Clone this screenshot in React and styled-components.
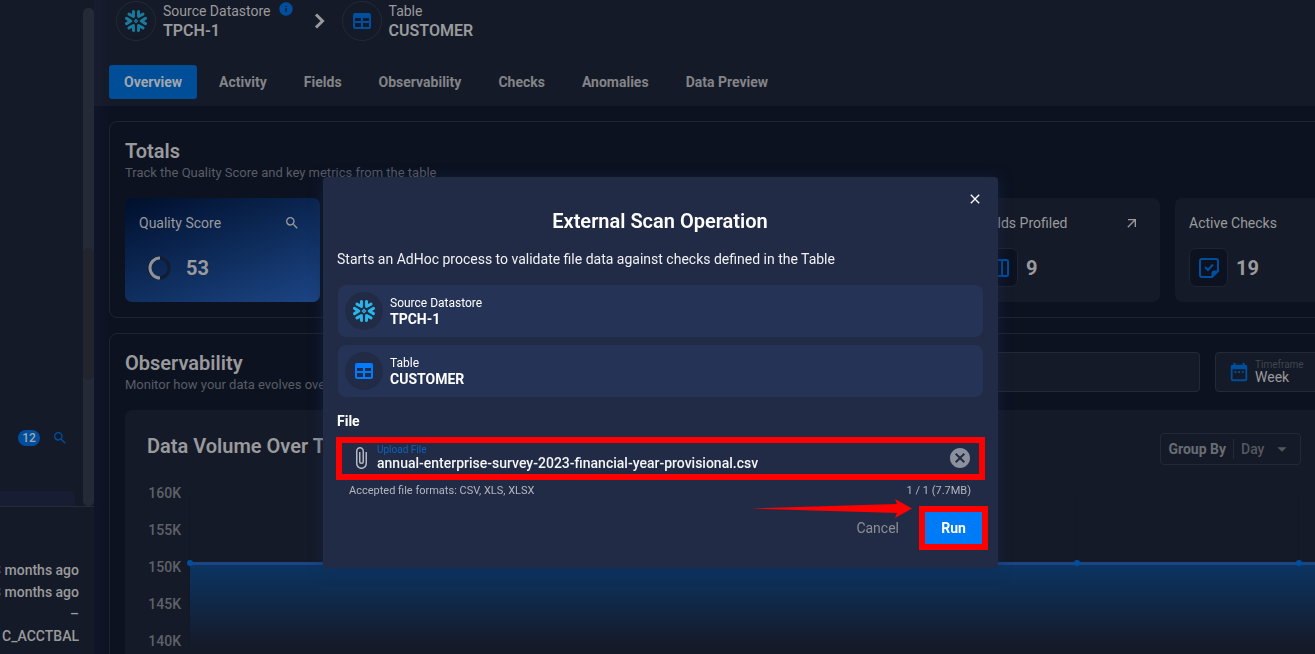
import React from 'react';
import styled, { createGlobalStyle, css } from 'styled-components';
import {
  MdSearch,
  MdArrowOutward,
  MdDateRange,
  MdArrowDropDown,
  MdAttachFile,
  MdCancel,
  MdClose,
  MdInfo,
} from 'react-icons/md';

const c = {
  page: '#0c1220',
  surface: '#151a28',
  line: '#1f2431',
  text: '#9a9a9c',
  tab: '#838487',
  muted: '#5a5d65',
  blue: '#004f9e',
  snow: '#1b7a9c',
  modal: '#222b45',
  modalRow: '#243356',
  mark: '#ff0000',
};

const GlobalStyle = createGlobalStyle`
  *, *::before, *::after { box-sizing: border-box; }
  body {
    margin: 0;
    background: ${c.page};
    color: ${c.text};
    font: 400 14px/20px Roboto, "Liberation Sans", sans-serif;
  }
  h1, h2, h3, p { margin: 0; }
  button, input, select { font: inherit; color: inherit; }
  button { border: 0; padding: 0; background: none; cursor: pointer; }
  svg { display: block; flex: none; }
`;

const Shell = styled.div`
  display: grid;
  grid-template-columns: 94px minmax(0, 1fr);
  height: 100vh;
  overflow: hidden;
`;

/* Sidebar */
const Sidebar = styled.aside`
  display: flex;
  flex-direction: column;
  background: ${c.surface};
  overflow: hidden;
`;
const SideScroll = styled.div`
  flex: 0 0 507px;
  display: flex;
  border-bottom: 1px solid #262b37;
`;
const SideList = styled.div`
  flex: 1;
  display: flex;
  flex-direction: column;
  justify-content: flex-end;
  gap: 45px;
`;
const SideTools = styled.div`
  display: flex;
  align-items: center;
  justify-content: flex-end;
  gap: 12px;
  padding-right: 15px;
  color: ${c.blue};
`;
const Badge = styled.span`
  min-width: 22px;
  border-radius: 8px;
  background: ${c.blue};
  color: #a5a5a5;
  font-size: 12px;
  font-weight: 500;
  line-height: 16px;
  text-align: center;
`;
const SideItem = styled.div`
  height: 15px;
  margin-right: 8px;
  border-radius: 0 4px 0 0;
  background: #171e33;
`;
const Track = styled.div`
  width: 11px;
  margin-top: 8px;
  padding-top: 240px;
  border-radius: 5px;
  background: #242a37;
`;
const Thumb = styled.div`
  height: 132px;
  border-radius: 5px;
  background: #22242e;
`;
const Facts = styled.ul`
  display: flex;
  flex-direction: column;
  align-items: flex-end;
  margin: 0;
  padding: 52px 15px 0 0;
  list-style: none;
  font-weight: 500;
  line-height: 22px;
  white-space: nowrap;
`;

/* Main column */
const Main = styled.main`
  display: flex;
  flex-direction: column;
  overflow: hidden;
  background: linear-gradient(90deg, #10162a, ${c.page} 16px);
`;
const Header = styled.header`
  flex: none;
  background: linear-gradient(90deg, #171c31, ${c.surface} 16px);
  padding: 1px 15px 7px;
`;
const Crumbs = styled.div`
  display: flex;
  align-items: center;
  padding-left: 7px;
`;
const Crumb = styled.div`
  display: flex;
  align-items: center;
  gap: 7px;
`;
const Round = styled.span`
  display: grid;
  place-items: center;
  width: ${(p) => (p.$filled ? 38 : 40)}px;
  height: ${(p) => (p.$filled ? 38 : 40)}px;
  border-radius: 50%;
  ${(p) =>
    p.$filled
      ? css`background: ${c.modal};`
      : css`border: 1px solid #242936;`}
`;
const CrumbLabel = styled.div`
  display: flex;
  gap: 7px;
  line-height: 20px;
`;
const CrumbName = styled.div`
  font-size: 16px;
  font-weight: 600;
  line-height: 20px;
`;
const InfoMark = styled.span`
  color: ${c.blue};
`;
const Chevron = styled.svg`
  margin: 0 15px 0 19px;
`;
const Tabs = styled.nav`
  display: flex;
  gap: 7px;
  margin-top: 24px;
`;
const Tab = styled.button`
  height: 34px;
  padding: 0 15px;
  border-radius: 3px;
  font-weight: 700;
  color: ${(p) => (p.$active ? '#a3a7ab' : c.tab)};
  background: ${(p) => (p.$active ? '#004e98' : 'transparent')};
`;
const Content = styled.div`
  flex: none;
  display: flex;
  flex-direction: column;
  gap: 15px;
  padding: 15px;
  margin-right: -86px;
`;
const Panel = styled.section`
  border: 1px solid ${c.line};
  border-radius: 8px;
  padding: 15px;
`;
const PanelHead = styled.div`
  display: flex;
  gap: 15px;
  padding-top: 3px;
`;
const HeadText = styled.div`
  flex: 1;
`;
const Heading = styled.h2`
  font-size: 20px;
  font-weight: 600;
  line-height: 22px;
`;
const Sub = styled.p`
  color: ${c.muted};
  font-size: 13px;
  line-height: 22px;
`;

/* Total cards */
const Cards = styled.div`
  display: grid;
  grid-template-columns: repeat(6, 1fr);
  gap: 15px;
  margin-top: 14px;
`;
const Card = styled.article`
  height: 104px;
  padding: 15px 20px 15px 14px;
  border-radius: 7px;
  background: ${(p) =>
    p.$score
      ? 'linear-gradient(160deg, #000f2c, #0d2a58 50%, #1c4585)'
      : c.surface};
`;
const CardTop = styled.div`
  display: flex;
  align-items: center;
  justify-content: space-between;
`;
const CardValue = styled.div`
  display: flex;
  align-items: center;
  gap: 8px;
  margin-top: 15px;
  font-size: 20px;
  font-weight: 700;
`;
const IconBox = styled.span`
  display: grid;
  place-items: center;
  width: 39px;
  height: 39px;
  border: 1px solid ${c.line};
  border-radius: 7px;
  background: ${c.page};
`;
const RingBox = styled.span`
  display: grid;
  place-items: center;
  width: 39px;
  height: 39px;
`;

/* Observability controls */
const field = css`
  height: 40px;
  border: 1px solid #242936;
  border-radius: 4px;
  background: ${c.surface};
`;
const TableFilter = styled.input`
  ${field}
  width: 420px;
  padding: 0 12px;
`;
const Timeframe = styled.div`
  ${field}
  display: flex;
  align-items: center;
  gap: 5px;
  width: 155px;
  padding: 0 12px;
  color: ${c.blue};
`;
const Stack = styled.div`
  display: flex;
  flex-direction: column;
  flex: 1;
`;
const TinyLabel = styled.label`
  font-size: 10px;
  line-height: 11px;
  color: ${(p) => p.$color || '#41454f'};
`;
const PlainSelect = styled.select`
  appearance: none;
  border: 0;
  padding: 0;
  background: none;
  color: ${c.text};
  line-height: 15px;
  outline: none;
`;

const ChartCard = styled.div`
  margin-top: 14px;
  padding: 23px 0 0 22px;
  border-radius: 7px;
  background: ${c.surface};
`;
const ChartHead = styled.div`
  display: flex;
  align-items: flex-start;
  justify-content: space-between;
  padding-right: 69px;
`;
const ChartTitle = styled.h3`
  font-size: 20px;
  font-weight: 600;
  line-height: 26px;
`;
const GroupBy = styled.div`
  display: flex;
  align-items: center;
  height: 32px;
  padding: 0 7px;
  border: 1px solid #242936;
  border-radius: 4px;
  color: #55585f;
`;
const GroupLabel = styled.label`
  padding-right: 7px;
  border-right: 1px solid #242936;
  color: #6a6c73;
  font-weight: 700;
`;
const GroupSelect = styled(PlainSelect)`
  width: 30px;
  margin-left: 7px;
  color: #55585f;
  font-weight: 500;
`;
const Plot = styled.div`
  display: grid;
  grid-template-columns: 34px minmax(0, 1fr);
  gap: 4px;
  margin-top: 10px;
`;
const Axis = styled.div`
  text-align: right;
  line-height: 37px;
  font-weight: 500;
  color: #5f6168;
`;
const ChartSvg = styled.svg`
  width: 100%;
  height: 185px;
`;

/* Modal */
const Overlay = styled.div`
  position: fixed;
  inset: 0;
  display: flex;
  align-items: flex-start;
  justify-content: center;
  padding: 177px 0 0 6px;
`;
const Dialog = styled.section`
  width: 675px;
  max-width: 96vw;
  padding: 12px 15px 18px 14px;
  border-radius: 4px;
  background: ${c.modal};
  color: #fff;
  box-shadow: 0 2px 14px rgba(20, 42, 85, 0.6);
`;
const CloseRow = styled.div`
  display: flex;
  justify-content: flex-end;
  height: 20px;
`;
const Title = styled.h1`
  font-size: 20px;
  font-weight: 600;
  line-height: 24px;
  text-align: center;
`;
const Lead = styled.p`
  margin-top: 16px;
  color: #f0f1f4;
`;
const Target = styled.div`
  display: flex;
  align-items: center;
  gap: 7px;
  height: 52px;
  margin: ${(p) => (p.$first ? 16 : 8)}px 0 0 1px;
  padding: 0 7px;
  border-radius: 8px;
  background: ${c.modalRow};
`;
const TargetLabel = styled.div`
  font-size: 12px;
  line-height: 16px;
`;
const TargetName = styled.div`
  font-weight: 700;
  line-height: 16px;
`;
const FieldTitle = styled.h2`
  margin-top: 14px;
  font-size: 14px;
  font-weight: 700;
`;
const FileFrame = styled.div`
  display: flex;
  align-items: center;
  gap: 4px;
  height: 43px;
  margin: 6px -2px 0 -1px;
  padding: 0 7px 2px;
  border: 6px solid ${c.mark};
  color: #b4b8c2;
`;
const FileInput = styled.input`
  width: 100%;
  height: 16px;
  padding: 0;
  border: 0;
  outline: none;
  background: none;
  color: #f4f5f7;
  font-weight: 500;
`;
const ClearButton = styled.button`
  color: #8c909d;
`;
const Hint = styled.div`
  display: flex;
  justify-content: space-between;
  margin-top: 1px;
  padding: 0 12px;
  font-size: 11px;
  color: #b2b6c0;
`;
const Actions = styled.div`
  display: flex;
  align-items: center;
  justify-content: flex-end;
  gap: 20px;
  margin: 5px -5px 0 0;
`;
const Cancel = styled.button`
  color: #8d8f95;
`;
const RunFrame = styled.div`
  border: 6px solid ${c.mark};
`;
const Run = styled.button`
  display: block;
  width: 57px;
  height: 32px;
  background: #007bf8;
  color: #fff;
  font-weight: 700;
`;
const Pointer = styled.svg`
  position: absolute;
  right: 7px;
  top: -7px;
`;
const PointerAnchor = styled.div`
  position: relative;
  align-self: flex-start;
  margin-right: -20px;
`;

const SnowflakeIcon = ({ color }) => (
  <svg width="24" height="24" viewBox="-12 -12 24 24" fill="none" aria-hidden="true">
    <g stroke={color} strokeWidth="3" strokeLinecap="round" strokeLinejoin="round">
      {[0, 60, 120, 180, 240, 300].map((a) => (
        <path key={a} d="M9.500-2.600 5.200 0l4.300 2.600" transform={`rotate(${a})`} />
      ))}
    </g>
    <path d="M0-1.600 1.600 0 0 1.600-1.600 0z" stroke={color} strokeWidth="1.200" />
  </svg>
);
const TableIcon = ({ color, hole }) => (
  <svg width="18" height="16" viewBox="0 0 18 16" aria-hidden="true">
    <rect width="18" height="16" rx="2" fill={color} />
    <path
      fill={hole}
      d="M2 5h6v3H2zM10 5h6v3h-6zM2 10h6v4H2zM10 10h6v4h-6z"
    />
  </svg>
);
const NoteCheckIcon = () => (
  <svg width="20" height="20" viewBox="0 0 20 20" fill="none" aria-hidden="true">
    <path
      d="M3 1h14a2 2 0 0 1 2 2v10l-6 6H3a2 2 0 0 1-2-2V3a2 2 0 0 1 2-2z"
      stroke={c.blue}
      strokeWidth="2"
    />
    <path d="M19 12.500h-4a2.500 2.500 0 0 0-2.500 2.500v4z" fill={c.blue} />
    <path d="m6 9 3 3 5-5.500" stroke={c.blue} strokeWidth="2" />
  </svg>
);
const ColumnsIcon = () => (
  <svg width="20" height="18" viewBox="0 0 20 18" fill="none" aria-hidden="true">
    <rect x="1" y="1" width="18" height="16" rx="1.500" stroke={c.blue} strokeWidth="2" />
    <path d="M7 1v16M13 1v16" stroke={c.blue} strokeWidth="2" />
  </svg>
);
const ScoreRing = () => (
  <svg width="24" height="24" viewBox="0 0 24 24" fill="none" aria-hidden="true">
    <circle cx="12" cy="12" r="10" stroke="#131c30" strokeWidth="3" />
    <path d="M13 22A10 10 0 1 1 13 2" stroke="#8f9297" strokeWidth="3" />
  </svg>
);

const tabs = ['Overview', 'Activity', 'Fields', 'Observability', 'Checks', 'Anomalies', 'Data Preview'];
const ticks = ['160K', '155K', '150K', '145K', '140K'];
const points = [4, 226, 448, 670, 891, 1113];
const facts = ['3 months ago', '3 months ago', '–', 'C_ACCTBAL'];

export default function App() {
  return (
    <>
      <GlobalStyle />
      <Shell>
        <Sidebar>
          <SideScroll>
            <SideList>
              <SideTools>
                <Badge>12</Badge>
                <MdSearch size={16} />
              </SideTools>
              <SideItem />
            </SideList>
            <Track>
              <Thumb />
            </Track>
          </SideScroll>
          <Facts>
            {facts.map((f, i) => (
              <li key={i}>{f}</li>
            ))}
          </Facts>
        </Sidebar>

        <Main>
          <Header>
            <Crumbs>
              <Crumb>
                <Round>
                  <SnowflakeIcon color={c.snow} />
                </Round>
                <div>
                  <CrumbLabel>
                    Source Datastore
                    <InfoMark>
                      <MdInfo size={16} />
                    </InfoMark>
                  </CrumbLabel>
                  <CrumbName>TPCH-1</CrumbName>
                </div>
              </Crumb>
              <Chevron width="14" height="16" viewBox="0 0 14 16" fill="none">
                <path d="m3 1.500 6.500 6.500L3 14.500" stroke={c.text} strokeWidth="3" />
              </Chevron>
              <Crumb>
                <Round>
                  <TableIcon color={c.blue} hole={c.surface} />
                </Round>
                <div>
                  <CrumbLabel>Table</CrumbLabel>
                  <CrumbName>CUSTOMER</CrumbName>
                </div>
              </Crumb>
            </Crumbs>
            <Tabs>
              {tabs.map((t, i) => (
                <Tab key={t} $active={i === 0}>
                  {t}
                </Tab>
              ))}
            </Tabs>
          </Header>

          <Content>
            <Panel>
              <PanelHead>
                <HeadText>
                  <Heading>Totals</Heading>
                  <Sub>Track the Quality Score and key metrics from the table</Sub>
                </HeadText>
              </PanelHead>
              <Cards>
                <Card $score>
                  <CardTop>
                    Quality Score
                    <MdSearch size={16} />
                  </CardTop>
                  <CardValue>
                    <RingBox>
                      <ScoreRing />
                    </RingBox>
                    53
                  </CardValue>
                </Card>
                <Card />
                <Card />
                <Card />
                <Card>
                  <CardTop>
                    Fields Profiled
                    <MdArrowOutward size={16} />
                  </CardTop>
                  <CardValue>
                    <IconBox>
                      <ColumnsIcon />
                    </IconBox>
                    9
                  </CardValue>
                </Card>
                <Card>
                  <CardTop>Active Checks</CardTop>
                  <CardValue>
                    <IconBox>
                      <NoteCheckIcon />
                    </IconBox>
                    19
                  </CardValue>
                </Card>
              </Cards>
            </Panel>

            <Panel>
              <PanelHead>
                <HeadText>
                  <Heading>Observability</Heading>
                  <Sub>Monitor how your data evolves over time</Sub>
                </HeadText>
                <TableFilter aria-label="Filter" />
                <Timeframe>
                  <MdDateRange size={22} />
                  <Stack>
                    <TinyLabel htmlFor="timeframe">Timeframe</TinyLabel>
                    <PlainSelect id="timeframe">
                      <option>Week</option>
                    </PlainSelect>
                  </Stack>
                </Timeframe>
              </PanelHead>
              <ChartCard>
                <ChartHead>
                  <ChartTitle>Data Volume Over Time</ChartTitle>
                  <GroupBy>
                    <GroupLabel htmlFor="group">Group By</GroupLabel>
                    <GroupSelect id="group">
                      <option>Day</option>
                    </GroupSelect>
                    <MdArrowDropDown size={22} />
                  </GroupBy>
                </ChartHead>
                <Plot>
                  <Axis>
                    {ticks.map((t) => (
                      <div key={t}>{t}</div>
                    ))}
                  </Axis>
                  <ChartSvg aria-hidden="true">
                    <defs>
                      <linearGradient id="volume" x1="0" y1="0" x2="0" y2="1">
                        <stop offset="0" stopColor="#0b3563" />
                        <stop offset="1" stopColor={c.surface} />
                      </linearGradient>
                    </defs>
                    {points.map((x) => (
                      <path key={x} d={`M${x + 0.5} 18v152`} stroke="#131826" />
                    ))}
                    <rect x="5" y="89" width="100%" height="82" fill="url(#volume)" />
                    <rect x="5" y="87" width="100%" height="3" fill="#1c4585" />
                    {points.map((x) => (
                      <circle key={x} cx={x + 1} cy="88" r="3" fill={c.blue} />
                    ))}
                  </ChartSvg>
                </Plot>
              </ChartCard>
            </Panel>
          </Content>
        </Main>
      </Shell>

      <Overlay>
        <Dialog role="dialog" aria-labelledby="dialog-title">
          <CloseRow>
            <button aria-label="Close">
              <MdClose size={16} />
            </button>
          </CloseRow>
          <Title id="dialog-title">External Scan Operation</Title>
          <Lead>Starts an AdHoc process to validate file data against checks defined in the Table</Lead>
          <Target $first>
            <Round $filled>
              <SnowflakeIcon color="#29b5e8" />
            </Round>
            <div>
              <TargetLabel>Source Datastore</TargetLabel>
              <TargetName>TPCH-1</TargetName>
            </div>
          </Target>
          <Target>
            <Round $filled>
              <TableIcon color="#007bff" hole={c.modal} />
            </Round>
            <div>
              <TargetLabel>Table</TargetLabel>
              <TargetName>CUSTOMER</TargetName>
            </div>
          </Target>
          <FieldTitle>File</FieldTitle>
          <FileFrame>
            <MdAttachFile size={24} />
            <Stack>
              <TinyLabel htmlFor="file" $color="#0a62c4">
                Upload File
              </TinyLabel>
              <FileInput
                id="file"
                readOnly
                value="annual-enterprise-survey-2023-financial-year-provisional.csv"
              />
            </Stack>
            <ClearButton aria-label="Clear file">
              <MdCancel size={24} />
            </ClearButton>
          </FileFrame>
          <Hint>
            <span>Accepted file formats: CSV, XLS, XLSX</span>
            <span>1 / 1 (7.7MB)</span>
          </Hint>
          <Actions>
            <Cancel>Cancel</Cancel>
            <PointerAnchor>
              <Pointer width="162" height="19" viewBox="0 0 162 19">
                <path d="M0 9.500 147 5l-2-5 17 9.500-17 9.500 2-5z" fill={c.mark} />
              </Pointer>
            </PointerAnchor>
            <RunFrame>
              <Run>Run</Run>
            </RunFrame>
          </Actions>
        </Dialog>
      </Overlay>
    </>
  );
}
